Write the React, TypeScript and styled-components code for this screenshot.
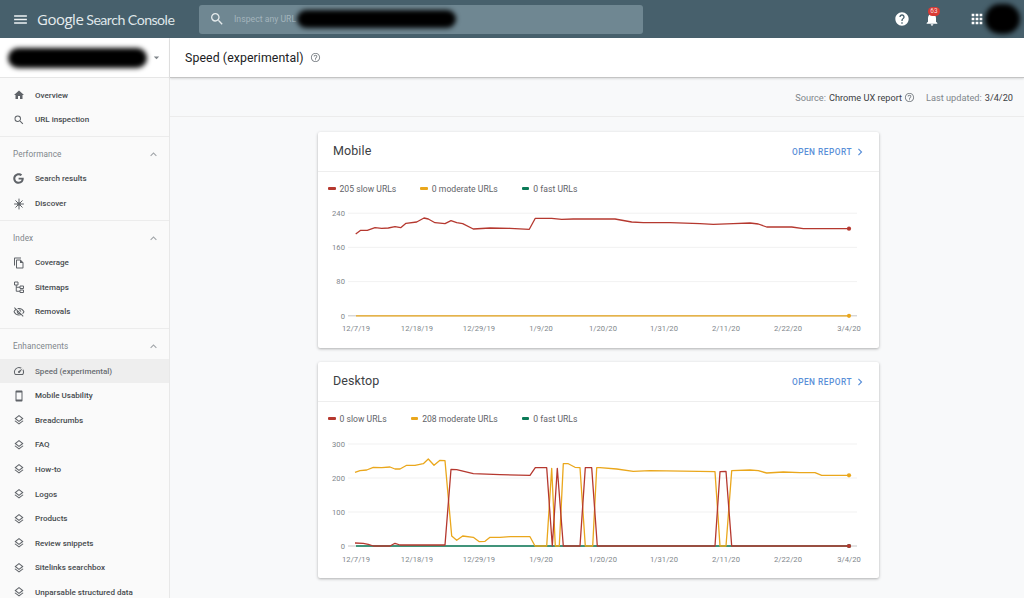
import React from "react";
import styled, { createGlobalStyle } from "styled-components";
import {
  MdMenu, MdSearch, MdHelp, MdNotifications, MdApps, MdHome, MdExpandLess, MdOutlineFileCopy,
  MdOutlineVisibilityOff, MdOutlineSpeed, MdOutlineSmartphone, MdOutlineLayers, MdHelpOutline,
  MdChevronRight, MdArrowDropDown,
} from "react-icons/md";
import { FaGoogle } from "react-icons/fa";

const GlobalStyle = createGlobalStyle`
  html, body { margin: 0; padding: 0; height: 100%; overflow: hidden; background: #f8f9fa; }
  body { font-family: Roboto, "Liberation Sans", sans-serif; }
`;

const Page = styled.div`
  width: 1024px; height: 598px; display: flex; flex-direction: column; overflow: hidden;
`;
const TopBar = styled.header`
  height: 38px; flex: none; display: flex; align-items: center; background: #47606c; color: #fff;
`;
const MenuButton = styled.div`
  width: 37px; display: flex; align-items: center; justify-content: center; padding-left: 3px; box-sizing: border-box; font-size: 17px; color: #eef2f3;
`;
const Logo = styled.div`
  width: 162px; flex: none; display: flex; align-items: baseline; gap: 3px; color: #e6ecee; font-family: "Open Sans", sans-serif; font-size: 15px; letter-spacing: -0.5px;
`;
const LogoSearch = styled.span`
  font-family: Lato, sans-serif; font-size: 14.2px; letter-spacing: -0.55px; color: #dfe6e9;
`;
const SearchBox = styled.div`
  width: 444px; height: 29px; display: flex; align-items: center; background: #6f8792; border-radius: 3px; padding-left: 10px; box-sizing: border-box; gap: 9px; color: #e4eaec;
  font-size: 16px;
`;
const Placeholder = styled.span`
  font-size: 8.7px; color: #a3b4bc; width: 62px; margin-right: -8px; white-space: nowrap; flex: none;
`;
const Redaction = styled.div<{ $w: number; $h: number }>`
  width: ${(p) => p.$w}px; height: ${(p) => p.$h}px; flex: none; background: #000; border-radius: ${(p) => p.$h / 2}px; filter: blur(2.5px);
`;
const TopActions = styled.div`
  margin-left: auto; display: flex; align-items: center; font-size: 16px; color: #fff;
`;
const TopIcon = styled.div<{ $w: number }>`
  width: ${(p) => p.$w}px; display: flex; justify-content: center; align-items: center; position: relative;
`;
const Badge = styled.span`
  position: absolute; top: -4px; left: 11px; min-width: 12px; height: 9px; border-radius: 5px; background: #d93a35; color: #f6dcdc; font-size: 6.5px; line-height: 9px; text-align: center;
`;
const Body = styled.div`
  flex: 1; display: flex; min-height: 0;
`;
const Sidebar = styled.aside`
  width: 170px; flex: none; background: #fafafa; border-right: 1px solid #e8e8e8; box-sizing: border-box; overflow: hidden;
`;
const PropertyRow = styled.div`
  height: 40px; display: flex; align-items: center; padding-left: 8px; background: #fff; border-bottom: 1px solid #e6e6e6; box-sizing: border-box; color: #80868b; font-size: 13px; gap: 3px;
`;
const NavGroup = styled.nav<{ $open?: boolean }>`
  padding: 4.9px 0 4.1px; border-bottom: ${(p) => (p.$open ? "none" : "1px solid #ececec")};
`;
const GroupHeader = styled.div`
  height: 24.6px; display: flex; align-items: center; justify-content: space-between; padding: 0 9px 0 13px; font-size: 8.2px; color: #80868b; letter-spacing: 0.1px;
  svg { font-size: 13px; color: #a0a4a8; }
`;
const NavRow = styled.div<{ $active?: boolean }>`
  height: 24.6px; display: flex; align-items: center; padding-left: 13px; font-size: 8.05px; font-weight: 500; color: ${(p) => (p.$active ? "#696d72" : "#464a4e")}; background: ${(p) => (p.$active ? "#eeeeee" : "transparent")}; white-space: nowrap;
`;
const NavIcon = styled.span`
  width: 22px; flex: none; display: flex; font-size: 12px; color: #5f6368;
`;
const Main = styled.main`
  flex: 1; min-width: 0; display: flex; flex-direction: column; background: #f8f9fa;
`;
const TitleBar = styled.div`
  height: 40px; flex: none; display: flex; align-items: center; gap: 6px; padding-left: 15px; background: #fff; border-bottom: 1px solid #c4c4c4; box-shadow: 0 1px 2px rgba(0,0,0,.12); box-sizing: border-box;
`;
const PageTitle = styled.h1`
  margin: 0; font-size: 12.3px; font-weight: 400; color: #202124; letter-spacing: 0.1px;
`;
const TitleHelp = styled.span`
  display: flex; font-size: 11px; color: #80868b;
`;
const SourceBar = styled.div`
  height: 39px; flex: none; display: flex; align-items: center; justify-content: flex-end; padding-right: 11px; border-bottom: 1px solid #ececec; font-size: 9.2px; color: #80868b; box-sizing: border-box;
`;
const SourceValue = styled.span`
  color: #3c4043; margin-left: 3px;
`;
const SourceHelp = styled.span`
  display: flex; font-size: 11px; margin: 0 11px 0 2px; color: #80868b;
`;
const Content = styled.div`
  display: flex; flex-direction: column; align-items: center; gap: 14px; padding: 15px 0 0 3px;
`;
const Card = styled.section`
  width: 561px; height: 216px; background: #fff; border-radius: 2px; box-shadow: 0 1px 3px rgba(0,0,0,.3); display: flex; flex-direction: column;
`;
const CardHead = styled.div`
  height: 40px; flex: none; display: flex; align-items: center; justify-content: space-between; padding: 0 15px 2px 15px; border-bottom: 1px solid #eeeeee; box-sizing: border-box;
`;
const CardTitle = styled.h2`
  margin: 0; font-size: 12.5px; font-weight: 400; color: #3c4043; letter-spacing: 0.1px;
`;
const OpenLink = styled.a`
  display: flex; align-items: center; margin-top: 3px; font-size: 8.3px; font-weight: 500; color: #5a8fd8; letter-spacing: 0.5px;
  svg { font-size: 14px; margin-left: 1px; margin-right: -3px; }
`;
const Legend = styled.div`
  height: 28px; flex: none; display: flex; align-items: center; gap: 24px; padding: 5px 0 0 10px; box-sizing: border-box;
`;
const LegendItem = styled.div`
  display: flex; align-items: center; gap: 4px; font-size: 8.6px; color: #5f6368; letter-spacing: 0.02px;
`;
const LegendDash = styled.i<{ $c: string }>`
  width: 7.500px; height: 2.200px; border-radius: 1px; background: ${(p) => p.$c};
`;
const Plot = styled.svg`
  display: block; flex: none; width: 561px; height: 148px;
`;
const AxisText = styled.text`
  font-size: 7.6px; fill: #80868b; font-family: Roboto, sans-serif; letter-spacing: 0.05px;
`;

const RED = "#b5382f";
const ORANGE = "#eaa71c";
const GREEN = "#0b7a57";

type Series = { color: string; points: string; end: [number, number] };

const z1 = (pts: number[][], ox: number, oy: number) => pts.map(([x, y]) => `${(x / 3 + ox).toFixed(1)},${(y / 3 + oy).toFixed(1)}`).join(" ");

const mobileRed = z1([[137,327],[152,316],[172,316],[195,308],[215,310],[235,309],[255,305],[272,308],[288,295],[320,291],[342,279],[355,282],[375,293],[405,296],[423,287],[440,293],[458,296],[490,312],[540,309],[600,310],[658,313],[676,280],[725,280],[755,283],[790,282],[870,282]], 310, 125)
  + " " + z1([[45,282],[95,291],[130,293],[160,293],[210,293],[300,296],[340,298],[400,296],[450,294],[475,297],[500,306],[575,306],[610,311],[747,311]], 600, 125);

const deskOrange = z1([[135,352],[150,347],[170,345],[190,337],[215,338],[240,336],[255,342],[270,342],[290,331],[315,331],[340,326],[355,312],[372,331],[390,316],[405,317],[425,543],[440,556],[458,543],[490,547],[508,560],[525,559],[540,547],[570,547],[600,545],[660,545],[675,573],[710,573],[725,340],[736,573],[748,573],[760,326],[775,326],[795,337],[810,338],[826,573],[848,573],[860,338],[870,338]], 310, 355)
  + " " + z1([[50,342],[100,349],[150,347],[345,350],[360,573],[378,573],[395,347],[450,345],[475,347],[500,354],[550,351],[600,353],[645,353],[665,361],[747,361]], 600, 355);

const deskRed = z1([[135,564],[160,565],[175,568],[190,573],[240,573],[255,565],[270,570],[405,570],[423,343],[440,344],[490,356],[570,359],[660,361],[676,338],[710,338],[727,573],[742,340],[760,573],[810,573],[826,338],[845,338],[862,573],[870,573]], 310, 355)
  + " " + z1([[345,573],[360,350],[378,349],[395,573],[747,573]], 600, 355);

const DATES: [string, number][] = [["12/7/19",356],["12/18/19",417],["12/29/19",479],["1/9/20",541],["1/20/20",603],["1/31/20",664],["2/11/20",726],["2/22/20",788],["3/4/20",849]];

function Chart({ top, zero, step, labels, series }: { top: number; zero: number; step: number; labels: string[]; series: Series[] }) {
  return (
    <Plot viewBox={`318 ${top} 561 148`}>
      {labels.map((l, i) => {
        const y = zero - step * i;
        return (
          <g key={l}>
            <line x1={348} x2={857} y1={y} y2={y} stroke={i === 0 ? "#b8b8b8" : "#eeeeee"} strokeWidth={0.8} />
            <AxisText x={345} y={y + 2.8} textAnchor="end">{l}</AxisText>
          </g>
        );
      })}
      {DATES.map(([d, x]) => (
        <AxisText key={d} x={x} y={zero + 15.5} textAnchor="middle">{d}</AxisText>
      ))}
      {series.map((s) => (
        <g key={s.color}>
          <polyline points={s.points} fill="none" stroke={s.color} strokeWidth={1.3} strokeLinejoin="round" />
          <circle cx={s.end[0]} cy={s.end[1]} r={2.1} fill={s.color} />
        </g>
      ))}
    </Plot>
  );
}

function ReportCard({ title, legend, chart }: { title: string; legend: [string, string][]; chart: React.ReactNode }) {
  return (
    <Card>
      <CardHead>
        <CardTitle>{title}</CardTitle>
        <OpenLink>OPEN REPORT<MdChevronRight /></OpenLink>
      </CardHead>
      <Legend>
        {legend.map(([c, t]) => (
          <LegendItem key={t}><LegendDash $c={c} />{t}</LegendItem>
        ))}
      </Legend>
      {chart}
    </Card>
  );
}

const Discover = () => (
  <svg width="12" height="12" viewBox="0 0 24 24" fill="none" stroke="#5f6368" strokeWidth="2" strokeLinecap="round">
    <path d="M12 2v20M3 12h18M5.500 5.500l13 13M18.500 5.500l-13 13" />
    <circle cx="12" cy="12" r="3.5" fill="#5f6368" stroke="none" />
  </svg>
);
const SitemapIcon = () => (
  <svg width="12" height="12" viewBox="0 0 24 24" fill="none" stroke="#5f6368" strokeWidth="2">
    <path d="M3 2h7v6H3zM14 10h7v5h-7zM14 18h7v5h-7zM6.500 8v12.500H14M6.500 12.500H14" />
  </svg>
);
const layers = <MdOutlineLayers />;

export default function App() {
  return (
    <Page>
      <GlobalStyle />
      <TopBar>
        <MenuButton><MdMenu /></MenuButton>
        <Logo>Google<LogoSearch>Search Console</LogoSearch></Logo>
        <SearchBox>
          <MdSearch />
          <Placeholder>Inspect any URL</Placeholder>
          <Redaction $w={159} $h={18} />
        </SearchBox>
        <TopActions>
          <TopIcon $w={30}><MdHelp /></TopIcon>
          <TopIcon $w={30}><MdNotifications /><Badge>63</Badge></TopIcon>
          <TopIcon $w={22} />
          <TopIcon $w={16}><MdApps /></TopIcon>
          <Redaction $w={35} $h={30} />
          <TopIcon $w={4} />
        </TopActions>
      </TopBar>
      <Body>
        <Sidebar>
          <PropertyRow>
            <Redaction $w={139} $h={20} />
            <MdArrowDropDown />
          </PropertyRow>
          <NavGroup>
            <NavRow><NavIcon><MdHome /></NavIcon>Overview</NavRow>
            <NavRow><NavIcon><MdSearch /></NavIcon>URL inspection</NavRow>
          </NavGroup>
          <NavGroup>
            <GroupHeader>Performance<MdExpandLess /></GroupHeader>
            <NavRow><NavIcon><FaGoogle size={11} /></NavIcon>Search results</NavRow>
            <NavRow><NavIcon><Discover /></NavIcon>Discover</NavRow>
          </NavGroup>
          <NavGroup>
            <GroupHeader>Index<MdExpandLess /></GroupHeader>
            <NavRow><NavIcon><MdOutlineFileCopy /></NavIcon>Coverage</NavRow>
            <NavRow><NavIcon><SitemapIcon /></NavIcon>Sitemaps</NavRow>
            <NavRow><NavIcon><MdOutlineVisibilityOff /></NavIcon>Removals</NavRow>
          </NavGroup>
          <NavGroup $open>
            <GroupHeader>Enhancements<MdExpandLess /></GroupHeader>
            <NavRow $active><NavIcon><MdOutlineSpeed /></NavIcon>Speed (experimental)</NavRow>
            <NavRow><NavIcon><MdOutlineSmartphone /></NavIcon>Mobile Usability</NavRow>
            {["Breadcrumbs", "FAQ", "How-to", "Logos", "Products", "Review snippets", "Sitelinks searchbox", "Unparsable structured data"].map((t) => (
              <NavRow key={t}><NavIcon>{layers}</NavIcon>{t}</NavRow>
            ))}
          </NavGroup>
        </Sidebar>
        <Main>
          <TitleBar>
            <PageTitle>Speed (experimental)</PageTitle>
            <TitleHelp><MdHelpOutline /></TitleHelp>
          </TitleBar>
          <SourceBar>
            Source:<SourceValue>Chrome UX report</SourceValue>
            <SourceHelp><MdHelpOutline /></SourceHelp>
            Last updated:<SourceValue>3/4/20</SourceValue>
          </SourceBar>
          <Content>
            <ReportCard
              title="Mobile"
              legend={[[RED, "205 slow URLs"], [ORANGE, "0 moderate URLs"], [GREEN, "0 fast URLs"]]}
              chart={
                <Chart top={200} zero={315.8} step={34.2} labels={["0", "80", "160", "240"]}
                  series={[
                    { color: RED, points: mobileRed, end: [849, 228.7] },
                    { color: ORANGE, points: "356,315.8 849,315.8", end: [849, 315.8] },
                  ]} />
              }
            />
            <ReportCard
              title="Desktop"
              legend={[[RED, "0 slow URLs"], [ORANGE, "208 moderate URLs"], [GREEN, "0 fast URLs"]]}
              chart={
                <Chart top={430} zero={546} step={34} labels={["0", "100", "200", "300"]}
                  series={[
                    { color: GREEN, points: "356,546 849,546", end: [849, 546] },
                    { color: ORANGE, points: deskOrange, end: [849, 475.3] },
                    { color: RED, points: deskRed, end: [849, 546] },
                  ]} />
              }
            />
          </Content>
        </Main>
      </Body>
    </Page>
  );
}
